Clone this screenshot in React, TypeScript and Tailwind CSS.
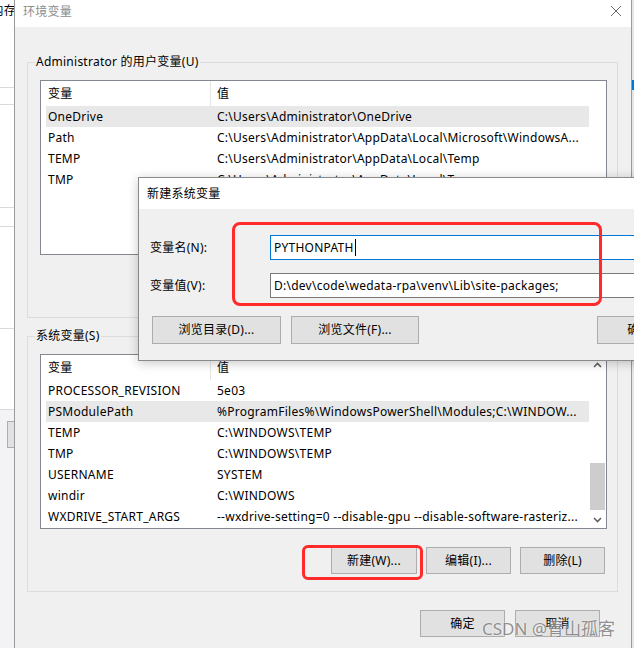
import type { ReactNode } from "react";

type VarRow = { name: string; value: string };

const USER_VARS: VarRow[] = [
  { name: "OneDrive", value: "C:\\Users\\Administrator\\OneDrive" },
  { name: "Path", value: "C:\\Users\\Administrator\\AppData\\Local\\Microsoft\\WindowsA..." },
  { name: "TEMP", value: "C:\\Users\\Administrator\\AppData\\Local\\Temp" },
  { name: "TMP", value: "C:\\Users\\Administrator\\AppData\\Local\\Temp" },
];

const SYSTEM_VARS: VarRow[] = [
  { name: "PROCESSOR_REVISION", value: "5e03" },
  { name: "PSModulePath", value: "%ProgramFiles%\\WindowsPowerShell\\Modules;C:\\WINDOW..." },
  { name: "TEMP", value: "C:\\WINDOWS\\TEMP" },
  { name: "TMP", value: "C:\\WINDOWS\\TEMP" },
  { name: "USERNAME", value: "SYSTEM" },
  { name: "windir", value: "C:\\WINDOWS" },
  { name: "WXDRIVE_START_ARGS", value: "--wxdrive-setting=0 --disable-gpu --disable-software-rasteriz..." },
];

const WinButton = ({ children, className = "" }: { children: ReactNode; className?: string }) => (
  <div
    className={`shrink-0 flex items-center justify-center bg-[#e1e1e1] border border-[#adadad] whitespace-nowrap ${className}`}
  >
    {children}
  </div>
);

const Chevron = ({ up }: { up: boolean }) => (
  <svg width="9" height="6" viewBox="0 0 9 6" className="block">
    <polyline
      points={up ? "1,5 4.5,1.5 8,5" : "1,1 4.5,4.5 8,1"}
      fill="none"
      stroke="#606060"
      strokeWidth="1.6"
    />
  </svg>
);

const ListBox = ({
  rows,
  selected,
  scrollbar,
}: {
  rows: VarRow[];
  selected: number;
  scrollbar?: boolean;
}) => (
  <div className="h-[175px] border border-[#828790] bg-white flex overflow-hidden">
    <div className="flex-1 min-w-0 pl-[5px]">
      <div className="h-[25px] flex items-center">
        <div className="w-[165px] h-full shrink-0 pl-[2px] flex items-center border-r border-[#e5e5e5]">变量</div>
        <div className="pl-[6px]">值</div>
      </div>
      {rows.map((row, index) => (
        <div
          key={row.name + index}
          className={`h-[21px] flex items-center whitespace-nowrap ${index === selected ? "bg-[#e8e8e8]" : ""}`}
        >
          <div className="w-[165px] shrink-0 pl-[2px]">{row.name}</div>
          <div className="pl-[6px] overflow-hidden">{row.value}</div>
        </div>
      ))}
    </div>
    <div className="w-[17px] shrink-0 flex flex-col">
      {scrollbar && (
        <>
          <div className="h-[19px] flex items-center justify-center">
            <Chevron up />
          </div>
          <div className="flex-1 flex flex-col justify-end pb-[1px]">
            <div className="h-[47px] mx-[1px] bg-[#cdcdcd]" />
          </div>
          <div className="h-[17px] flex items-center justify-center">
            <Chevron up={false} />
          </div>
        </>
      )}
    </div>
  </div>
);

const GroupBox = ({
  label,
  rows,
  selected,
  scrollbar,
  buttons,
  className = "",
}: {
  label: string;
  rows: VarRow[];
  selected: number;
  scrollbar?: boolean;
  buttons: [string, string, string];
  className?: string;
}) => (
  <div className={`relative border border-[#dcdcdc] ml-[12px] mr-[13px] pt-[17px] pb-[17px] pl-[12px] pr-[10px] ${className}`}>
    <span className="absolute left-[7px] -top-[9px] px-[1px] bg-[#f0f0f0] leading-[16px] whitespace-nowrap">
      {label}
    </span>
    <ListBox rows={rows} selected={selected} scrollbar={scrollbar} />
    <div className="flex justify-end gap-[9px] mt-[18px] pr-[2px]">
      <WinButton className="w-[86px] h-[27px]">{buttons[0]}</WinButton>
      <WinButton className="w-[85px] h-[27px]">{buttons[1]}</WinButton>
      <WinButton className="w-[85px] h-[27px]">{buttons[2]}</WinButton>
    </div>
  </div>
);

const BehindWindowStrip = () => (
  <div className="w-[14px] shrink-0 h-full flex flex-col overflow-hidden bg-[#f3f3f5]">
    <div className="h-[410px] shrink-0 bg-white flex flex-col border-b border-[#dadada]">
      <div className="h-[88px] shrink-0 border-b border-[#dadada] flex justify-end items-start pt-[3px] whitespace-nowrap">
        <span className="-mr-[2px] leading-[16px]">内存</span>
      </div>
      <div className="h-[17px] shrink-0 border-b border-[#dadada]" />
      <div className="h-[103px] shrink-0 border-b border-[#dadada]" />
      <div className="h-[19px] shrink-0 border-b border-[#dadada]" />
      <div className="h-[102px] shrink-0 border-b border-[#dadada]" />
    </div>
    <div className="mt-[11px] ml-[7px] w-[20px] h-[27px] shrink-0 bg-[#e1e1e1] border border-[#adadad]" />
  </div>
);

const NewVariableDialog = () => (
  <div className="absolute left-[138px] top-[177px] w-[540px] h-[184px] border border-[#8a8a8a] bg-[#f0f0f0] shadow-[0_2px_10px_rgba(0,0,0,0.22)] flex flex-col">
    <div className="h-[31px] shrink-0 bg-white flex items-center pl-[8px]">新建系统变量</div>
    <div className="pt-[26px] flex flex-col">
      <div className="h-[25px] flex items-center">
        <div className="w-[131px] shrink-0 pl-[11px]">变量名(N):</div>
        <div className="w-[420px] h-[25px] shrink-0 border border-[#0078d7] bg-white pl-[3px] flex items-center whitespace-nowrap">
          PYTHONPATH
          <span className="ml-[1px] w-[1px] h-[17px] bg-black" />
        </div>
      </div>
      <div className="h-[25px] mt-[13px] flex items-center">
        <div className="w-[131px] shrink-0 pl-[11px]">变量值(V):</div>
        <div className="w-[420px] h-[25px] shrink-0 border border-[#7a7a7a] bg-white pl-[3px] flex items-center whitespace-nowrap">
          D:\dev\code\wedata-rpa\venv\Lib\site-packages;
        </div>
      </div>
      <div className="mt-[18px] pl-[13px] flex">
        <WinButton className="w-[129px] h-[28px]">浏览目录(D)...</WinButton>
        <WinButton className="ml-[10px] w-[128px] h-[28px]">浏览文件(F)...</WinButton>
        <WinButton className="ml-[178px] w-[85px] h-[28px]">确定</WinButton>
      </div>
    </div>
  </div>
);

export default function App() {
  return (
    <div className="relative w-[634px] h-[648px] overflow-hidden flex bg-[#f0f0f0] text-[12px] leading-[16px] tracking-[0.25px] text-black font-['Noto_Sans','Noto_Sans_CJK_SC',sans-serif]">
      <BehindWindowStrip />

      <div className="w-[618px] shrink-0 h-full border-x border-[#9a9a9a] flex flex-col bg-[#f0f0f0]">
        <div className="h-[27px] shrink-0 bg-white flex items-center justify-between pl-[8px] pr-[9px]">
          <span className="-mt-[3px] text-[#8c8c8c]">环境变量</span>
          <svg width="12" height="12" viewBox="0 0 12 12" className="-mt-[5px]">
            <path d="M1 1 L11 11 M11 1 L1 11" stroke="#6a6a6a" strokeWidth="1" fill="none" />
          </svg>
        </div>

        <div className="pt-[35px] flex flex-col">
          <GroupBox
            label="Administrator 的用户变量(U)"
            rows={USER_VARS}
            selected={0}
            buttons={["新建(N)...", "编辑(E)...", "删除(D)"]}
          />
          <GroupBox
            className="mt-[18px]"
            label="系统变量(S)"
            rows={SYSTEM_VARS}
            selected={1}
            scrollbar
            buttons={["新建(W)...", "编辑(I)...", "删除(L)"]}
          />
          <div className="mt-[18px] flex justify-end gap-[10px] pr-[31px]">
            <WinButton className="w-[85px] h-[27px]">确定</WinButton>
            <WinButton className="w-[85px] h-[27px]">取消</WinButton>
          </div>
        </div>
      </div>

      <div className="w-[2px] shrink-0 h-full flex flex-col bg-[#e6e6e6]">
        <div className="h-[80px] shrink-0" />
        <div className="h-[10px] shrink-0 bg-[#0078d7]" />
      </div>

      <NewVariableDialog />

      <div className="absolute left-[232px] top-[222px] w-[370px] h-[84px] border-[3px] border-[#ff2b2b] rounded-[8px]" />
      <div className="absolute left-[302px] top-[545px] w-[121px] h-[35px] border-[3px] border-[#ff2b2b] rounded-[6px]" />

      <div className="absolute left-[482px] top-[619px] text-[17px] leading-[20px] tracking-normal whitespace-nowrap text-[rgba(110,110,110,0.75)] [text-shadow:0_0_2px_rgba(255,255,255,0.9)]">
        CSDN @青山孤客
      </div>
    </div>
  );
}
